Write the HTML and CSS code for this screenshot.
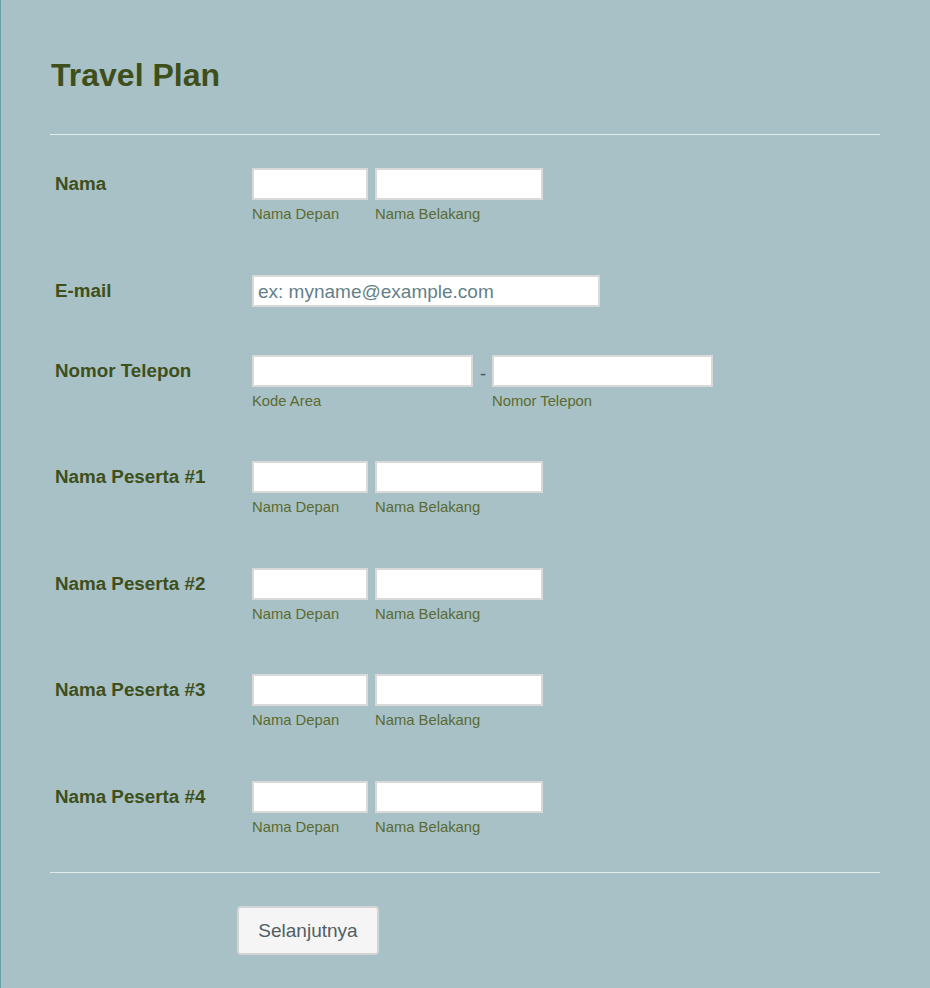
FILE: index.html
```html
<!DOCTYPE html>
<html lang="id">
<head>
    <meta charset="UTF-8">
    <meta name="viewport" content="width=device-width, initial-scale=1.0">
    <title>Travel Plan</title>
    <link rel="stylesheet" href="styles.css">
</head>
<body>

    <div class="form">
        <!-- Judul -->
        <div class="form-header">
            <h1>Travel Plan</h1>
        </div>
        <div class="divider"></div>

        <div class="rows">
            <!-- Nama -->
            <div class="row">
                <label class="row-label">Nama</label>
                <div class="fields">
                    <div class="field">
                        <input type="text" class="inp inp-first">
                        <span class="sub">Nama Depan</span>
                    </div>
                    <div class="field">
                        <input type="text" class="inp inp-last">
                        <span class="sub">Nama Belakang</span>
                    </div>
                </div>
            </div>

            <!-- Email -->
            <div class="row">
                <label class="row-label">E-mail</label>
                <div class="fields">
                    <input type="email" class="inp inp-email" placeholder="ex: myname@example.com">
                </div>
            </div>

            <!-- Telepon -->
            <div class="row">
                <label class="row-label">Nomor Telepon</label>
                <div class="fields">
                    <div class="field">
                        <input type="text" class="inp inp-phone">
                        <span class="sub">Kode Area</span>
                    </div>
                    <span class="dash">-</span>
                    <div class="field">
                        <input type="text" class="inp inp-phone">
                        <span class="sub">Nomor Telepon</span>
                    </div>
                </div>
            </div>

            <!-- Peserta -->
            <div class="row">
                <label class="row-label">Nama Peserta #1</label>
                <div class="fields">
                    <div class="field">
                        <input type="text" class="inp inp-first">
                        <span class="sub">Nama Depan</span>
                    </div>
                    <div class="field">
                        <input type="text" class="inp inp-last">
                        <span class="sub">Nama Belakang</span>
                    </div>
                </div>
            </div>

            <div class="row">
                <label class="row-label">Nama Peserta #2</label>
                <div class="fields">
                    <div class="field">
                        <input type="text" class="inp inp-first">
                        <span class="sub">Nama Depan</span>
                    </div>
                    <div class="field">
                        <input type="text" class="inp inp-last">
                        <span class="sub">Nama Belakang</span>
                    </div>
                </div>
            </div>

            <div class="row">
                <label class="row-label">Nama Peserta #3</label>
                <div class="fields">
                    <div class="field">
                        <input type="text" class="inp inp-first">
                        <span class="sub">Nama Depan</span>
                    </div>
                    <div class="field">
                        <input type="text" class="inp inp-last">
                        <span class="sub">Nama Belakang</span>
                    </div>
                </div>
            </div>

            <div class="row">
                <label class="row-label">Nama Peserta #4</label>
                <div class="fields">
                    <div class="field">
                        <input type="text" class="inp inp-first">
                        <span class="sub">Nama Depan</span>
                    </div>
                    <div class="field">
                        <input type="text" class="inp inp-last">
                        <span class="sub">Nama Belakang</span>
                    </div>
                </div>
            </div>
        </div>

        <div class="divider"></div>

        <div class="form-footer">
            <button class="btn-next">Selanjutnya</button>
        </div>
    </div>

</body>
</html>
```

FILE: styles.css
```css
* {
    margin: 0;
    padding: 0;
    box-sizing: border-box;
}

html, body {
    height: 100%;
}

body {
    font-family: "Liberation Sans", Arial, sans-serif;
    background: #a8c1c6;
}

.form {
    min-height: 100%;
    background: #a8c1c6;
    border-left: 1px solid #6a9eac;
    padding: 0 50px 0 49px;
}

.form-header {
    padding: 56px 0 40px 1px;
}

.form-header h1 {
    font-size: 32px;
    line-height: 38px;
    font-weight: bold;
    color: #3e4f1b;
}

.divider {
    border-top: 1px solid #e2eaeb;
}

.rows {
    padding: 9px 0 9px;
}

.row {
    display: flex;
    padding: 24px 0;
}

.row-label {
    width: 202px;
    flex-shrink: 0;
    padding: 4px 0 0 5px;
    font-size: 18.8px;
    line-height: 23px;
    font-weight: bold;
    color: #3e4f1b;
}

.fields {
    display: flex;
    align-items: flex-start;
    gap: 7px;
}

.field {
    display: flex;
    flex-direction: column;
}

.inp {
    height: 32px;
    border: 2px solid #d9d9d9;
    background: #fff;
    padding: 2px 4px 0;
    font-family: inherit;
    font-size: 19px;
    color: #333;
    outline: none;
}

.inp::placeholder {
    color: #647f88;
}

.inp-first { width: 116px; }
.inp-last { width: 168px; }
.inp-email { width: 348px; }
.inp-phone { width: 221px; }

.sub {
    margin-top: 5px;
    padding-bottom: 3.5px;
    font-size: 14.8px;
    line-height: 18px;
    color: #5a6a32;
}

.fields .dash {
    width: 5px;
    line-height: 38px;
    font-size: 18px;
    color: #3f5560;
}

.form-footer {
    padding: 33px 0 33px 187px;
}

.btn-next {
    width: 142px;
    height: 49px;
    background: #f5f5f5;
    border: 2px solid #d3d3d3;
    border-radius: 4px;
    font-family: inherit;
    font-size: 19px;
    color: #4f5e63;
    cursor: pointer;
}
```
